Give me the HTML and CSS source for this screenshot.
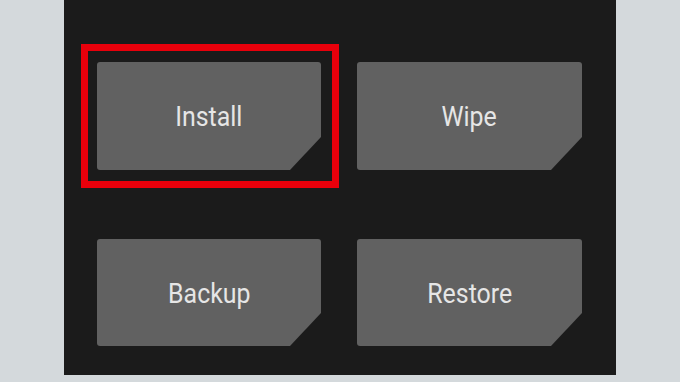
FILE: index.html
```html
<!DOCTYPE html>
<html lang="en">
<head>
  <meta charset="UTF-8">
  <title>TWRP</title>
  <link rel="stylesheet" href="styles.css">
</head>
<body>
<div class="screen">
  <div class="menu">
    <div class="tile selected"><span class="label">Install</span></div>
    <div class="tile"><span class="label">Wipe</span></div>
    <div class="tile"><span class="label">Backup</span></div>
    <div class="tile"><span class="label">Restore</span></div>
  </div>
</div>
</body>
</html>
```

FILE: styles.css
```css
html, body {
  margin: 0;
  padding: 0;
  background-color: #d4d9dc;
}
body {
  width: 680px;
  height: 382px;
  overflow: hidden;
  font-family: Roboto, "Noto Sans", sans-serif;
}
.screen {
  width: 552px;
  height: 375px;
  margin-left: 64px;
  background-color: #1b1b1b;
  box-sizing: border-box;
  padding: 62px 34px 0 33px;
}
.menu {
  display: grid;
  grid-template-columns: 224px 225px;
  grid-template-rows: 108px 107px;
  column-gap: 36px;
  row-gap: 69px;
}
.tile {
  position: relative;
  display: flex;
  align-items: center;
  justify-content: center;
  background-color: #616161;
  color: #e6e6e6;
  font-size: 28px;
  border-radius: 3px;
  clip-path: polygon(0 0, 100% 0, 100% calc(100% - 33px), calc(100% - 31px) 100%, 0 100%);
}
.label {
  display: inline-block;
  transform: scaleX(0.89); /* recovery font is a narrow one */
  margin-top: 1px;
}
.tile.selected {
  clip-path: none;
  background: none;
  isolation: isolate;
}
/* highlighted tile: the grey shape goes in ::before so the red frame can sit outside it */
.tile.selected::before {
  content: "";
  position: absolute;
  inset: 0;
  background-color: #616161;
  border-radius: 3px;
  clip-path: polygon(0 0, 100% 0, 100% calc(100% - 33px), calc(100% - 31px) 100%, 0 100%);
  z-index: -1;
}
.tile.selected::after {
  content: "";
  position: absolute;
  left: -16px;
  top: -18px;
  right: -18px;
  bottom: -18px;
  border: 7px solid #e8000b;
}
```
